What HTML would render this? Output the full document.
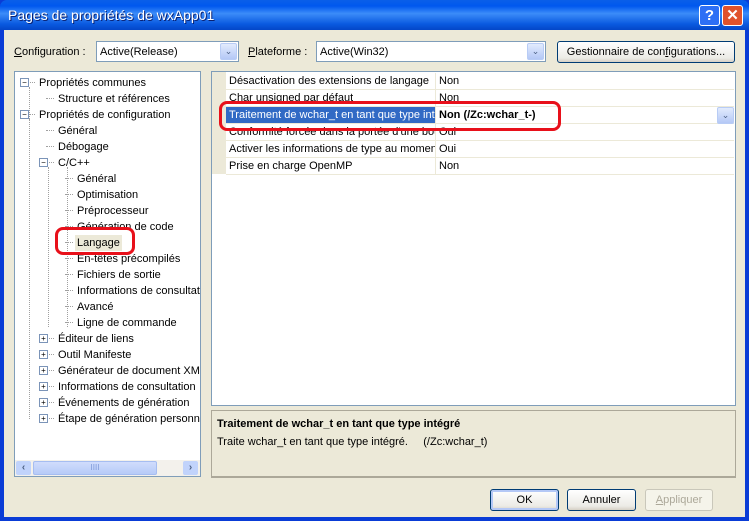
<!DOCTYPE html><html><head><meta charset="utf-8"><style>
*{box-sizing:border-box}body{margin:0;width:749px;height:521px;overflow:hidden;font-family:"Liberation Sans",Arial,sans-serif;font-size:11px;position:relative;background:#0a3cd6}
.a{position:absolute}
.win{left:4px;top:30px;width:741px;height:487px;background:#ece9d8}
.title{left:0;top:0;width:749px;height:30px;background:linear-gradient(#0a5fe8,#0058ee 20%,#3c8cf8 45%,#0a5ae0 80%,#0446c8);border-radius:7px 7px 0 0}
.combo{background:#fff;border:1px solid #7f9db9;height:21px;padding:4px 0 0 3px;white-space:nowrap}
.dd{position:absolute;right:1px;top:1px;width:17px;height:17px;background:linear-gradient(#e2ebfd,#b4c8f6);border:1px solid #b8ccf5;border-radius:2px;color:#4d6185;font-size:9px;text-align:center;line-height:15px}
.btn{border:1px solid #003c74;border-radius:3px;background:linear-gradient(#fff,#ecebe6 80%,#d6d0c5);text-align:center;line-height:21px;white-space:nowrap}
.t{position:absolute;white-space:nowrap;line-height:16px}
.ex{position:absolute;width:9px;height:9px;border:1px solid #7b94b8;background:#fff;font-size:8px;line-height:7px;text-align:center;color:#000}
.dl{position:absolute;border-top:1px dotted #a0a0a0;width:8px}
.row{position:absolute;left:226px;width:508px;height:17px;border-bottom:1px solid #ece9d8}
.row span{position:absolute;top:2px;white-space:nowrap;overflow:hidden}
.red{position:absolute;border:3px solid #e8101a;border-radius:8px}
</style></head><body>
<div class="a title"></div>
<div class="a" style="left:8px;top:7px;color:#fff;font-size:14px;font-family:'Liberation Sans',sans-serif;text-shadow:1px 1px #0a2070">Pages de propriétés de wxApp01</div>
<div class="a" style="left:699px;top:5px;width:21px;height:21px;border:1px solid #fff;border-radius:3px;background:#2d6ff5;color:#fff;font-weight:bold;font-size:15px;text-align:center;line-height:19px">?</div>
<div class="a" style="left:722px;top:5px;width:21px;height:21px;border:1px solid #fff;border-radius:3px;background:#e0522c;color:#fff;font-weight:bold;font-size:15px;text-align:center;line-height:19px">✕</div>
<div class="a win"></div>
<div class="a" style="left:14px;top:46px"><u>C</u>onfiguration :</div>
<div class="a combo" style="left:96px;top:41px;width:143px">Active(Release)<div class="dd">⌄</div></div>
<div class="a" style="left:248px;top:46px"><u>P</u>lateforme :</div>
<div class="a combo" style="left:316px;top:41px;width:230px">Active(Win32)<div class="dd">⌄</div></div>
<div class="a btn" style="left:557px;top:41px;width:178px;height:22px">Gestionnaire de con<u>f</u>igurations...</div>
<div class="a" style="left:14px;top:71px;width:187px;height:406px;background:#fff;border:1px solid #7f9db9;overflow:hidden">
<div class="a" style="left:14px;top:15px;height:40px;border-left:1px dotted #a0a0a0"></div>
<div class="a" style="left:14px;top:47px;height:300px;border-left:1px dotted #a0a0a0"></div>
<div class="a" style="left:33px;top:95px;height:160px;border-left:1px dotted #a0a0a0"></div>
<div class="a" style="left:52px;top:95px;height:160px;border-left:1px dotted #a0a0a0"></div>
</div>
<div id="tree"></div>
<script>
var items=[[0,"Propriétés communes","-"],[1,"Structure et références"],[0,"Propriétés de configuration","-"],[1,"Général"],[1,"Débogage"],[1,"C/C++","-"],[2,"Général"],[2,"Optimisation"],[2,"Préprocesseur"],[2,"Génération de code"],[2,"Langage"],[2,"En-têtes précompilés"],[2,"Fichiers de sortie"],[2,"Informations de consultation"],[2,"Avancé"],[2,"Ligne de commande"],[1,"Éditeur de liens","+"],[1,"Outil Manifeste","+"],[1,"Générateur de document XML","+"],[1,"Informations de consultation","+"],[1,"Événements de génération","+"],[1,"Étape de génération personnalisée","+"]];
var h="";items.forEach(function(it,i){var y=75+i*16,x=39+it[0]*19;
h+='<div class="dl" style="left:'+(x-12)+'px;top:'+(y+7)+'px"></div>';
if(it[2])h+='<div class="ex" style="left:'+(x-19)+'px;top:'+(y+3)+'px">'+(it[2]=="-"?"−":"+")+'</div>';
h+='<div class="t" style="left:'+x+'px;top:'+y+'px;'+(it[1]=="Langage"?"background:#ece9d8;padding:0 2px;margin-left:-2px;":"")+'max-width:'+(200-x)+'px;overflow:hidden">'+it[1]+'</div>';});
document.getElementById("tree").innerHTML=h;
</script>
<div class="a" style="left:15px;top:460px;width:185px;height:16px;background:#f3f1ec">
<div class="a" style="left:1px;top:1px;width:15px;height:14px;background:#c1d3fb;border-radius:2px;color:#4d6185;font-size:10px;text-align:center;line-height:14px;font-weight:bold">‹</div>
<div class="a" style="left:18px;top:1px;width:124px;height:14px;background:linear-gradient(#d0dcfc,#b7cbf8);border:1px solid #a6bdf1;border-radius:2px;color:#7e99d8;text-align:center;font-size:8px;line-height:12px">IIII</div>
<div class="a" style="left:168px;top:1px;width:15px;height:14px;background:#c1d3fb;border-radius:2px;color:#4d6185;font-size:10px;text-align:center;line-height:14px;font-weight:bold">›</div>
</div>
<div class="a" style="left:211px;top:71px;width:525px;height:335px;background:#fff;border:1px solid #7f9db9"></div>
<div class="a" style="left:212px;top:72px;width:14px;height:102px;background:#ece9d8"></div>
<div class="row" style="top:73px"><span style="left:3px;width:206px">Désactivation des extensions de langage</span><span style="left:213px">Non</span></div>
<div class="row" style="top:90px"><span style="left:3px">Char unsigned par défaut</span><span style="left:213px">Non</span></div>
<div class="row" style="top:107px"><span style="left:0;width:209px;height:16px;top:0;background:#316ac5;color:#fff;padding:2px 3px">Traitement de wchar_t en tant que type intégré</span><span style="left:213px;font-weight:bold">Non (/Zc:wchar_t-)</span><div class="dd" style="top:0;right:0">⌄</div></div>
<div class="row" style="top:124px"><span style="left:3px;width:206px">Conformité forcée dans la portée d'une boucle For</span><span style="left:213px">Oui</span></div>
<div class="row" style="top:141px"><span style="left:3px;width:206px">Activer les informations de type au moment de l'exécution</span><span style="left:213px">Oui</span></div>
<div class="row" style="top:158px"><span style="left:3px">Prise en charge OpenMP</span><span style="left:213px">Non</span></div>
<div class="a" style="left:435px;top:73px;height:101px;border-left:1px solid #ece9d8"></div>
<div class="a" style="left:211px;top:410px;width:525px;height:68px;border:1px solid #aca899;border-bottom:2px solid #aca899"></div>
<div class="a" style="left:217px;top:418px;font-weight:bold">Traitement de wchar_t en tant que type intégré</div>
<div class="a" style="left:217px;top:436px">Traite wchar_t en tant que type intégré. &nbsp;&nbsp;&nbsp;&nbsp;(/Zc:wchar_t)</div>
<div class="a btn" style="left:490px;top:489px;width:69px;height:22px;border-color:#003c74;box-shadow:inset 0 0 0 2px #b4c8f6">OK</div>
<div class="a btn" style="left:567px;top:489px;width:69px;height:22px">Annuler</div>
<div class="a btn" style="left:645px;top:489px;width:68px;height:22px;border-color:#c9c7ba;color:#aca899;background:#f5f4ea"><u>A</u>ppliquer</div>
<div class="red" style="left:55px;top:227px;width:80px;height:28px"></div>
<div class="red" style="left:219px;top:101px;width:342px;height:30px"></div>
</body></html>
